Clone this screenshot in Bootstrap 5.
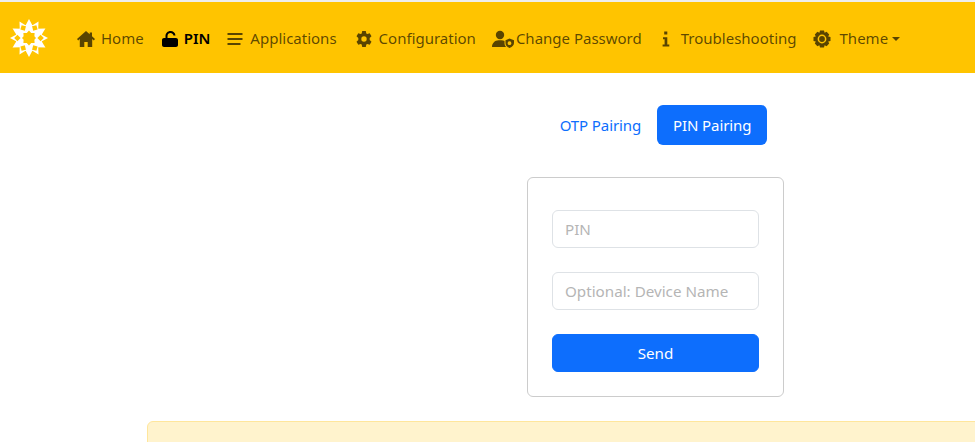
<!DOCTYPE html>
<html lang="en">
<head>
    <meta charset="UTF-8">
    <meta name="viewport" content="width=device-width, initial-scale=1.0">
    <title>PIN</title>
    <link href="https://cdn.jsdelivr.net/npm/bootstrap@5.3.0/dist/css/bootstrap.min.css" rel="stylesheet">
    <style>
        html, body { overflow-x: hidden; }
        body { font-family: "Noto Sans", "Open Sans", sans-serif; font-size: 15px; }
        .top-bar { background-color: #ffc400; border-top: 2px solid #eeeeee; height: 73px; padding: 0 0 0 10px; }
        .top-bar .navbar-brand { padding: 0; margin-right: 21px; line-height: 0; }
        .top-bar .nav-link { color: rgba(0, 0, 0, .65); padding: 9px 9px 7px; display: flex; align-items: center; white-space: nowrap; }
        .top-bar .nav-link.active { color: #000; font-weight: 600; }
        .top-bar .nav-link.link-apps { padding-right: 10px; }
        .top-bar .nav-link.link-tight { padding-right: 7px; }
        .top-bar .nav-link.link-wide { padding-right: 8px; }
        .nav-ico { width: 18px; height: 18px; margin-right: 6px; fill: currentColor; flex: none; }
        .ico-user { width: 22px; margin-right: 2px; }
        .ico-theme { margin-right: 9px; }
        .page-wrap { margin-left: 147px; width: 1017px; }
        .pair-tabs { margin-top: 32px; letter-spacing: -.1px; }
        .pair-tabs .nav-link { height: 40px; padding: 9px 16px 7px; }
        .pair-box { width: 257px; height: 220px; margin: 32px auto 24px; padding: 32px 24px 0; border: 1px solid #cccccc; border-radius: 6px; }
        .pair-box .form-control { height: 38px; margin-bottom: 24px; font-size: 15.2px; border-color: #dee2e6; }
        .pair-box .form-control::placeholder { color: #b5b5b5; }
        .pair-box .btn { height: 38px; padding: 0; font-size: 15.2px; }
        .note-box { height: 60px; margin: 0; }
    </style>
</head>
<body>

    <nav class="navbar navbar-expand top-bar">
        <a class="navbar-brand" href="#">
            <svg width="38" height="38" viewBox="-19 -19 38 38">
                <defs>
                    <polygon id="spike" points="-4,-11.5 0,-19 4,-11.5" fill="#fff"/>
                    <polygon id="hole" points="0,-14.8 3.2,-11.6 0,-8.4 -3.2,-11.6" fill="#ffc400"/>
                </defs>
                <circle r="13" fill="#fff"/>
                <use href="#spike"/>
                <use href="#spike" transform="rotate(30)"/>
                <use href="#spike" transform="rotate(60)"/>
                <use href="#spike" transform="rotate(90)"/>
                <use href="#spike" transform="rotate(120)"/>
                <use href="#spike" transform="rotate(150)"/>
                <use href="#spike" transform="rotate(180)"/>
                <use href="#spike" transform="rotate(210)"/>
                <use href="#spike" transform="rotate(240)"/>
                <use href="#spike" transform="rotate(270)"/>
                <use href="#spike" transform="rotate(300)"/>
                <use href="#spike" transform="rotate(330)"/>
                <use href="#hole" transform="rotate(30)"/>
                <use href="#hole" transform="rotate(90)"/>
                <use href="#hole" transform="rotate(150)"/>
                <use href="#hole" transform="rotate(210)"/>
                <use href="#hole" transform="rotate(270)"/>
                <use href="#hole" transform="rotate(330)"/>
                <polygon points="0,-7.5 2.2,-5 5.6,-5 5.4,-1.8 7,0 5.4,1.8 5.6,5 2.2,5 0,7.5 -2.2,5 -5.6,5 -5.4,1.8 -7,0 -5.4,-1.8 -5.6,-5 -2.2,-5" fill="#ffc400"/>
            </svg>
        </a>
        <ul class="navbar-nav">
            <li class="nav-item">
                <a class="nav-link" href="#">
                    <svg class="nav-ico" viewBox="0 0 18 18"><path d="M9 1 0 9 1.2 10.4 2.8 9V17H7.3V12H10.7V17H15.2V9L16.8 10.4 18 9 15 6.3V2.5H12.7V4.3Z"/></svg>
                    Home
                </a>
            </li>
            <li class="nav-item">
                <a class="nav-link active" href="#">
                    <svg class="nav-ico" viewBox="-1.5 0 18 18"><path d="M2.5 8H4V6C4 3.2 6.2 1 9 1 11.6 1 13.7 2.8 14 5.4H12C11.7 3.9 10.5 3 9 3 7.3 3 6 4.3 6 6V8H14.5C15.6 8 16.5 8.9 16.5 10V15C16.5 16.1 15.6 17 14.5 17H2.5C1.4 17 .5 16.1.5 15V10C.5 8.9 1.4 8 2.5 8Z"/></svg>
                    PIN
                </a>
            </li>
            <li class="nav-item">
                <a class="nav-link link-apps" href="#">
                    <svg class="nav-ico" viewBox="0 0 18 18"><path d="M1.5 3H16.5V5H1.5ZM1.5 8H16.5V10H1.5ZM1.5 13H14.5V15H1.5Z"/></svg>
                    Applications
                </a>
            </li>
            <li class="nav-item">
                <a class="nav-link" href="#">
                    <svg class="nav-ico" viewBox="-9 -9 18 18">
                        <path fill-rule="evenodd" d="M-1.8-8H1.8L2.3-5.6 3.4-5 5.7-5.8 7.5-2.7 5.7-1.1V1.1L7.5 2.7 5.7 5.8 3.4 5 2.3 5.6 1.8 8H-1.8L-2.3 5.6-3.4 5-5.7 5.8-7.5 2.7-5.7 1.1V-1.1L-7.5-2.7-5.7-5.8-3.4-5-2.3-5.6ZM0-2.7A2.7 2.7 0 1 0 0 2.7 2.7 2.7 0 1 0 0-2.7Z"/>
                    </svg>
                    Configuration
                </a>
            </li>
            <li class="nav-item">
                <a class="nav-link link-tight" href="#">
                    <svg class="nav-ico ico-user" viewBox="0 0 22 18">
                        <circle cx="8" cy="5" r="4.2"/>
                        <path d="M0 17C0 13 3 10.2 6.5 10.2H9.5C10.6 10.2 11.6 10.4 12.5 10.9V13C12.5 14.6 13.2 16 14.2 17Z"/>
                        <path fill-rule="evenodd" d="M17.5 8.5 22 10.2V13C22 15 20.5 16.8 17.5 18 14.5 16.8 13.5 15 13.5 13V10.2ZM17.5 11.3A1.9 1.9 0 1 0 17.5 15.1 1.9 1.9 0 1 0 17.5 11.3Z"/>
                    </svg>
                    Change Password
                </a>
            </li>
            <li class="nav-item">
                <a class="nav-link link-wide" href="#">
                    <svg class="nav-ico" viewBox="0 0 18 18"><path d="M7.2 1.5H10.3V4.5H7.2ZM6 7.2H10.3V14.5H12.3V16.5H5.6V14.5H7.6V9.2H6Z"/></svg>
                    Troubleshooting
                </a>
            </li>
            <li class="nav-item dropdown">
                <a class="nav-link dropdown-toggle" href="#">
                    <svg class="nav-ico ico-theme" viewBox="-9 -9 18 18">
                        <path fill-rule="evenodd" d="M-2-8.5H2L2.6-6.2 4.6-7.2 7.2-4.6 6.2-2.6 8.5-2V2L6.2 2.6 7.2 4.6 4.6 7.2 2.6 6.2 2 8.5H-2L-2.6 6.2-4.6 7.2-7.2 4.6-6.2 2.6-8.5 2V-2L-6.2-2.6-7.2-4.6-4.6-7.2-2.6-6.2ZM0-4.4A4.4 4.4 0 1 0 0 4.4 4.4 4.4 0 1 0 0-4.4ZM0-2.9A2.9 2.9 0 1 1 0 2.9 2.9 2.9 0 1 1 0-2.9Z"/>
                    </svg>
                    Theme
                </a>
            </li>
        </ul>
    </nav>

    <div class="page-wrap">
        <ul class="nav nav-pills justify-content-center pair-tabs">
            <li class="nav-item"><a class="nav-link" href="#">OTP Pairing</a></li>
            <li class="nav-item"><a class="nav-link active" href="#">PIN Pairing</a></li>
        </ul>

        <form class="pair-box">
            <input type="text" class="form-control" placeholder="PIN">
            <input type="text" class="form-control" placeholder="Optional: Device Name">
            <button type="button" class="btn btn-primary w-100">Send</button>
        </form>

        <div class="alert alert-warning note-box" role="alert"></div>
    </div>

    <script src="https://cdn.jsdelivr.net/npm/bootstrap@5.3.0/dist/js/bootstrap.bundle.min.js"></script>
</body>
</html>
